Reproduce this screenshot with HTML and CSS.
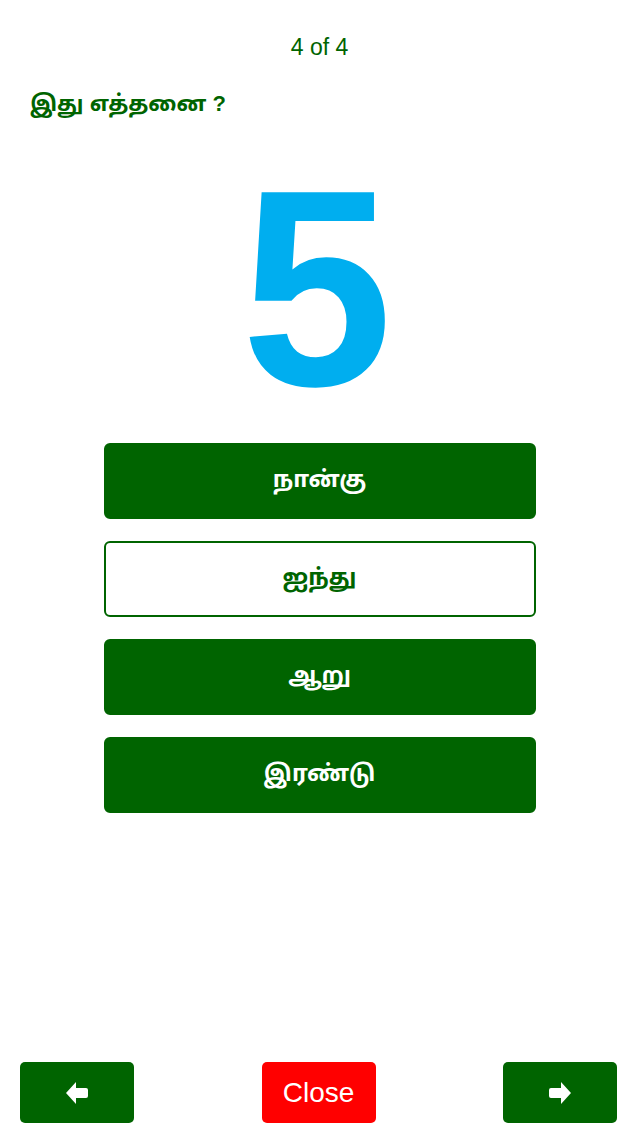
FILE: index.html
```html
<!DOCTYPE html>
<html lang="ta">
<head>
<meta charset="utf-8">
<title>இது எத்தனை ?</title>
<link rel="stylesheet" href="styles.css">
</head>
<body>
<div class="screen">
  <div class="counter">4 of 4</div>
  <h1 class="question">இது எத்தனை ?</h1>
  <div class="figure"><span class="digit">5</span></div>
  <div class="options">
    <button class="option">நான்கு</button>
    <button class="option option-selected">ஐந்து</button>
    <button class="option">ஆறு</button>
    <button class="option">இரண்டு</button>
  </div>
  <div class="footer">
    <button class="nav nav-green" aria-label="Previous">
      <svg width="22" height="24" viewBox="0 0 22 24"><path d="M0 12 L10 1 L10 7 L20 7 Q22 7 22 9 L22 15 Q22 17 20 17 L10 17 L10 23 Z" fill="#fff"/></svg>
    </button>
    <button class="nav nav-red">Close</button>
    <button class="nav nav-green" aria-label="Next">
      <svg width="22" height="24" viewBox="0 0 22 24"><path d="M22 12 L12 1 L12 7 L2 7 Q0 7 0 9 L0 15 Q0 17 2 17 L12 17 L12 23 Z" fill="#fff"/></svg>
    </button>
  </div>
</div>
</body>
</html>
```
FILE: styles.css
```css
html, body {
  margin: 0;
  padding: 0;
  background: #fff;
}
.screen {
  width: 639px;
  height: 1136px;
  display: flex;
  flex-direction: column;
  font-family: "Liberation Sans", "Noto Sans Tamil", "Noto Sans", sans-serif;
  box-sizing: border-box;
}
.screen > * {
  flex-shrink: 0;
}
.counter {
  margin-top: 35px;
  text-align: center;
  font-size: 23px;
  line-height: 24px;
  color: #006400;
}
.question {
  margin: 30px 0 0 30px;
  font-size: 22px;
  line-height: 30px;
  font-weight: bold;
  color: #006400;
}
.figure {
  margin-top: 54px;
  height: 230px;
  display: flex;
  justify-content: center;
}
.digit {
  font-family: "Liberation Sans", Arial, sans-serif;
  font-weight: bold;
  font-size: 280px;
  line-height: 230px;
  color: #00aeef;
  display: block;
  transform: translateX(-3px) scaleX(0.97);
}
.options {
  margin-top: 40px;
  display: flex;
  flex-direction: column;
  align-items: center;
  gap: 22px;
}
.option {
  width: 432px;
  height: 76px;
  border: 2px solid #006400;
  border-radius: 6px;
  background: #006400;
  color: #fff;
  font-family: "Liberation Sans", "Noto Sans Tamil", "Noto Sans", sans-serif;
  font-size: 23px;
  font-weight: bold;
  padding: 0;
}
.option-selected {
  background: #fff;
  color: #006400;
}
.footer {
  margin-top: auto;
  margin-bottom: 13px;
  padding: 0 22px 0 20px;
  display: flex;
  justify-content: space-between;
}
.nav {
  width: 114px;
  height: 61px;
  border: none;
  border-radius: 5px;
  display: flex;
  align-items: center;
  justify-content: center;
  color: #fff;
  font-family: "Liberation Sans", Arial, sans-serif;
  font-size: 28px;
  padding: 0;
}
.nav-green {
  background: #006400;
}
.nav-red {
  background: #ff0000;
}
```
